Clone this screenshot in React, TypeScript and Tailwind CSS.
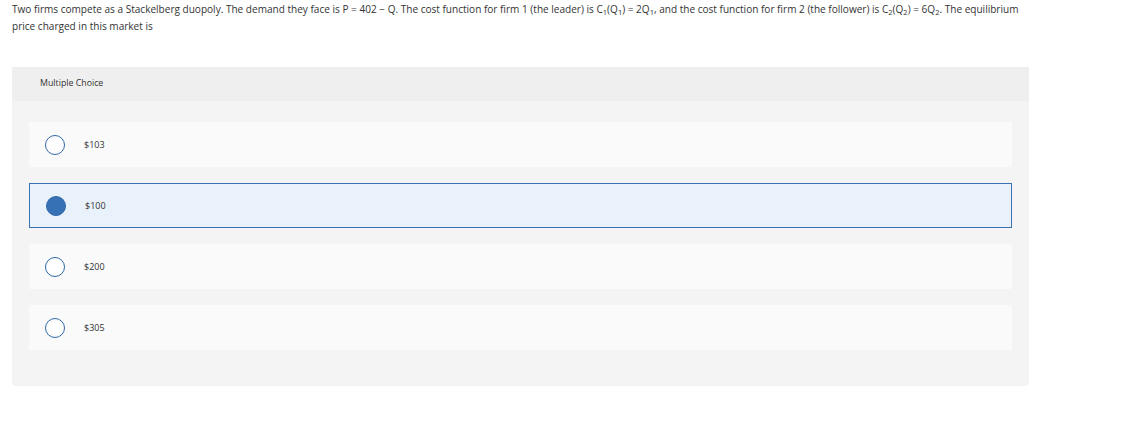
const options = [
  { label: '$103', selected: false },
  { label: '$100', selected: true },
  { label: '$200', selected: false },
  { label: '$305', selected: false },
];

function Sub({ children }: { children: React.ReactNode }) {
  return <span className="text-[7.5px] leading-none align-[-2px]">{children}</span>;
}

export default function App() {
  return (
    <div className="w-[1121px] h-[424px] bg-white text-[#333] font-['Open_Sans',sans-serif]">
      <p className="pl-3 w-[1042px] pt-[1px] text-[10.05px] leading-[17px]">
        Two firms compete as a Stackelberg duopoly. The demand they face is P = 402 − Q. The cost function for firm 1 (the leader) is C<Sub>1</Sub>(Q<Sub>1</Sub>) = 2Q<Sub>1</Sub>, and the cost function for firm 2 (the follower) is C<Sub>2</Sub>(Q<Sub>2</Sub>) = 6Q<Sub>2</Sub>. The equilibrium price charged in this market is
      </p>

      <div className="ml-3 mt-[32px] w-[1017px] bg-[#f4f4f4] rounded-b-sm">
        <div className="h-[34px] bg-[#efefef] flex items-center pl-[28px] text-[8.8px]">
          Multiple Choice
        </div>
        <div className="px-[17px] pt-[21px] pb-[36px] flex flex-col gap-4">
          {options.map((o) => (
            <div
              key={o.label}
              className={`h-[45px] flex items-center pl-[16px] ${
                o.selected ? 'bg-[#e9f1fb] border border-[#3a71b5]' : 'bg-[#fafafa]'
              }`}
            >
              <span
                className={`w-5 h-5 rounded-full border-[1.5px] border-[#2e68a8] shrink-0 ${
                  o.selected ? 'bg-[#3671b6]' : 'bg-white'
                }`}
              />
              <span className="ml-[19px] text-[9px]">{o.label}</span>
            </div>
          ))}
        </div>
      </div>
    </div>
  );
}
